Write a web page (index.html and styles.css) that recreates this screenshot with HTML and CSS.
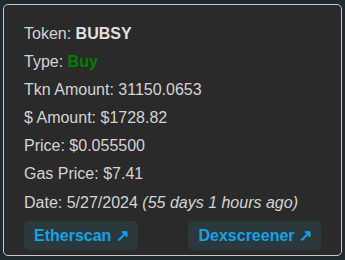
FILE: index.html
```html
<!DOCTYPE html>
<html>
<head>
<meta charset="utf-8">
<link rel="stylesheet" href="styles.css">
</head>
<body>
<div class="card">
  <div class="row">Token: <b class="token">BUBSY</b></div>
  <div class="row">Type: <b class="buy">Buy</b></div>
  <div class="row">Tkn Amount: 31150.0653</div>
  <div class="row">$ Amount: $1728.82</div>
  <div class="row">Price: $0.055500</div>
  <div class="row">Gas Price: $7.41</div>
  <div class="row">Date: 5/27/2024 <i>(55 days 1 hours ago)</i></div>
  <div class="links">
    <a class="btn" href="#">Etherscan <span class="arrow">↗</span></a>
    <a class="btn" href="#">Dexscreener <span class="arrow">↗</span></a>
  </div>
</div>
</body>
</html>
```
FILE: styles.css
```css
html, body {
  margin: 0;
  padding: 0;
  background: #1f2b30;
  width: 345px;
  height: 260px;
  overflow: hidden;
}
body {
  padding: 4px 3px;
  box-sizing: border-box;
  font-family: "Liberation Sans", Arial, sans-serif;
  font-size: 16px;
  color: #d4d4d4;
}
.card {
  background: #2a2a2a;
  border: 1px solid #c8c8c8;
  border-radius: 5px;
  padding: 14.5px 20px 5px;
  height: 252px;
  box-sizing: border-box;
}
.row {
  line-height: 28.2px;
  height: 28.2px;
  white-space: nowrap;
}
.token { color: #e0e0e0; }
.buy { color: #008000; }
.links {
  display: flex;
  justify-content: space-between;
  margin-top: 4px;
}
.btn {
  display: block;
  background: #2b393d;
  color: #15a2e6;
  font-weight: bold;
  text-decoration: none;
  height: 29px;
  line-height: 29px;
  padding: 0 10px;
  border-radius: 5px;
}
.arrow {
  display: inline-block;
  width: 12px;
  overflow: hidden;
  vertical-align: top;
}
```
